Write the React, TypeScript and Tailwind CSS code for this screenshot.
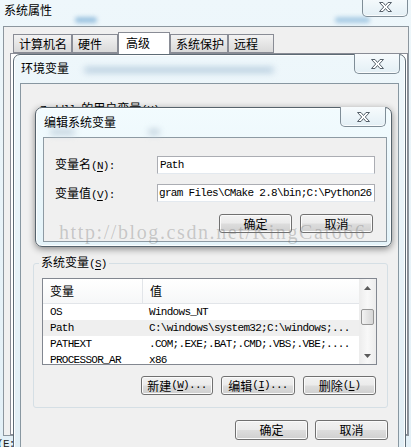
import React from "react";

const cjk = "font-['Noto_Sans_CJK_SC',sans-serif]";
const mono = "font-['Liberation_Mono','Noto_Sans_CJK_SC',monospace] text-[11px] tracking-[-0.7px]";
const btnFace =
  "h-[19px] rounded-[3px] border border-[#707070] bg-[linear-gradient(#f2f2f2_0%,#ebebeb_48%,#dddddd_52%,#cfcfcf_100%)] shadow-[inset_0_0_0_1px_#fbfbfb] flex items-center justify-center leading-none";

function CloseBtn() {
  return (
    <div className="w-[46px] h-[20px] shrink-0 rounded-b-[5px] border border-t-0 border-[#7f8d97] bg-[linear-gradient(#f7fbfd,#e3eff5)] shadow-[inset_0_-1px_0_rgba(255,255,255,0.8)] flex items-center justify-center">
      <svg width="13" height="10" viewBox="0 0 13 10">
        <path
          d="M0.5 0.5h3.5l2.5 3 2.5-3h3.5l-4.2 4.5 4.2 4.5h-3.5l-2.5-3-2.5 3h-3.5l4.2-4.5z"
          fill="#fff"
          stroke="#56606a"
          strokeWidth="1"
          strokeLinejoin="round"
        />
      </svg>
    </div>
  );
}

function Acc({ k, tail = "" }: { k: string; tail?: string }) {
  return (
    <span className={mono}>
      (<span className="underline underline-offset-2">{k}</span>){tail}
    </span>
  );
}

function Btn({ w, children }: { w: string; children: React.ReactNode }) {
  return <div className={`${btnFace} ${w}`}>{children}</div>;
}

const tabs = [
  { label: "计算机名", w: "w-[59px]" },
  { label: "硬件", w: "w-[46px]" },
  { label: "高级", w: "w-[52px]", on: true },
  { label: "系统保护", w: "w-[58px]" },
  { label: "远程", w: "w-[46px]" },
];

const rows = [
  { name: "OS", value: "Windows_NT" },
  { name: "Path", value: "C:\\windows\\system32;C:\\windows;...", sel: true },
  { name: "PATHEXT", value: ".COM;.EXE;.BAT;.CMD;.VBS;.VBE;...." },
  { name: "PROCESSOR_AR", value: "x86" },
];

function Arrow({ up }: { up?: boolean }) {
  return (
    <div className="h-[17px] flex items-center justify-center">
      <svg width="7" height="4" viewBox="0 0 7 4">
        <path d={up ? "M0 4L3.5 0L7 4z" : "M0 0L7 0L3.5 4z"} fill="#5b5b5b" />
      </svg>
    </div>
  );
}

export default function App() {
  return (
    <div className={`relative w-[411px] h-[447px] overflow-hidden bg-[linear-gradient(180deg,#eef7fb,#e3f0f7)] text-[12px] text-black ${cjk}`}>
      {/* blurred desktop behind the glass */}
      <div className="absolute left-[75px] top-[17px] w-[22px] h-[6px] rounded-full bg-[#9cc3e0] blur-[2px]" />
      <div className="absolute left-[335px] top-[17px] w-[35px] h-[6px] rounded-full bg-[#a8cbe4] blur-[2px]" />

      {/* 系统属性 */}
      <div className="absolute left-0 top-0 w-[411px] flex justify-between items-start">
        <div className="ml-[4px] mt-[2px] leading-[16px]">系统属性</div>
        <div className="mr-[3px] -mt-[3px]">
          <CloseBtn />
        </div>
      </div>
      <div className="absolute left-[3px] top-[26px] w-[406px] h-[410px] border border-[#8c969e] bg-[#f0f0f0] flex flex-col">
        <div className="h-[26px] pl-[9px] flex items-end">
          {tabs.map((t) => (
            <div
              key={t.label}
              className={
                t.on
                  ? `${t.w} h-[22px] -mb-px relative z-10 border border-b-0 border-[#898c95] bg-white pl-[7px] pt-[2px] leading-[16px]`
                  : `${t.w} h-[19px] border border-[#898c95] bg-[linear-gradient(#f3f3f3,#e6e6e6_50%,#d9d9d9)] pl-[5px] pt-[1px] leading-[16px]`
              }
            >
              {t.label}
            </div>
          ))}
        </div>
        <div className="flex-1 ml-[6px] border border-[#898c95] bg-white" />
      </div>
      <div className={`absolute left-[-3px] top-[436px] text-[#222] ${mono}`}>(E:</div>

      {/* 环境变量 */}
      <div className="absolute left-[13px] top-[54px] w-[393px] h-[420px] rounded-t-[7px] border border-[#5d6b75] bg-[linear-gradient(180deg,#eef7fb,#e1eef5)] shadow-[inset_0_0_0_1px_rgba(255,255,255,0.85)] flex flex-col">
        <div className="relative h-[28px] flex justify-between items-start">
          <div className="absolute left-[70px] top-[12px] w-[190px] h-[6px] rounded-full bg-[#b9cfe0] blur-[3px]" />
          <div className="relative ml-[7px] mt-[5px] leading-[16px]">环境变量</div>
          <div className="mr-[5px] -mt-px">
            <CloseBtn />
          </div>
        </div>
        <div className="flex-1 mx-[6px] border border-[#8897a1] bg-[#f0f0f0] flex flex-col">
          <div className="ml-[19px] mt-[16px] leading-[16px]">
            <span className={mono}>Zoddll </span>的用户变量<Acc k="U" />
          </div>
          <fieldset className="mt-[136px] ml-[12px] mr-[10px] pb-[12px] border border-[#d5dfe5] rounded-[3px]">
            <legend className="ml-[5px] px-[2px] leading-[16px]">
              系统变量<Acc k="S" />
            </legend>
            <div className="ml-[8px] mr-[10px] mt-[6px] h-[87px] border border-[#828790] bg-white flex overflow-hidden">
              <div className="flex-1 flex flex-col">
                <div className="h-[25px] shrink-0 flex border-b border-[#e2e5e9] bg-[linear-gradient(#ffffff,#f6f7f8)]">
                  <div className="w-[100px] pl-[7px] flex items-center border-r border-[#e2e5e9]">变量</div>
                  <div className="pl-[7px] flex items-center">值</div>
                </div>
                {rows.map((r) => (
                  <div key={r.name} className={`h-[16px] shrink-0 flex items-center ${r.sel ? "bg-[#efefef]" : ""}`}>
                    <div className={`w-[100px] pl-[7px] ${mono}`}>{r.name}</div>
                    <div className={`pl-[6px] whitespace-nowrap ${mono}`}>{r.value}</div>
                  </div>
                ))}
              </div>
              <div className="w-[17px] shrink-0 flex flex-col bg-[linear-gradient(90deg,#ececec,#f8f8f8_50%,#ececec)]">
                <Arrow up />
                <div className="flex-1">
                  <div className="mt-[13px] ml-[2px] w-[13px] h-[16px] rounded-[2px] border border-[#969696] bg-[linear-gradient(90deg,#f3f3f3,#e4e4e4_50%,#d6d6d6)]" />
                </div>
                <Arrow />
              </div>
            </div>
            <div className="mt-[11px] mr-[11px] flex justify-end gap-[8px]">
              <Btn w="w-[72px]">
                新建<Acc k="W" tail="..." />
              </Btn>
              <Btn w="w-[74px]">
                编辑<Acc k="I" tail="..." />
              </Btn>
              <Btn w="w-[73px]">
                删除<Acc k="L" />
              </Btn>
            </div>
          </fieldset>
          <div className="mt-[12px] mr-[10px] flex justify-end gap-[7px]">
            <Btn w="w-[73px] h-[20px]">确定</Btn>
            <Btn w="w-[73px] h-[20px]">取消</Btn>
          </div>
        </div>
      </div>

      {/* 编辑系统变量 */}
      <div className="absolute left-[35px] top-[107px] w-[357px] h-[140px] rounded-[7px] border border-[#56636c] bg-[linear-gradient(180deg,#f2fbfe,#e4f3f9)] shadow-[0_2px_7px_rgba(0,0,0,0.45),inset_0_0_0_1px_rgba(255,255,255,0.85)] flex flex-col">
        <div className="relative h-[29px] flex justify-between items-start">
          <div className="absolute left-[14px] top-[21px] w-[25px] h-[6px] rounded-full bg-[#c3d3df] blur-[3px]" />
          <div className="absolute left-[112px] top-[21px] w-[12px] h-[6px] rounded-full bg-[#c3d3df] blur-[3px]" />
          <div className="relative ml-[8px] mt-[6px] leading-[16px]">编辑系统变量</div>
          <div className="mr-[5px] -mt-px">
            <CloseBtn />
          </div>
        </div>
        <div className="flex-1 ml-[7px] mr-[4px] mb-[4px] border border-[#8d9aa3] bg-[#f0f0f0] flex flex-col">
          <div className="mt-[17px] ml-[11px] flex items-center">
            <div className="w-[102px]">
              变量名<Acc k="N" tail=":" />
            </div>
            <div className={`w-[218px] h-[18px] border border-[#abadb3] border-b-[#e3e9ef] bg-white pl-[2px] flex items-center ${mono}`}>
              Path
            </div>
          </div>
          <div className="mt-[9px] ml-[11px] flex items-center">
            <div className="w-[102px]">
              变量值<Acc k="V" tail=":" />
            </div>
            <div className={`w-[218px] h-[18px] border border-[#abadb3] border-b-[#e3e9ef] bg-white pl-[1px] flex items-center whitespace-nowrap overflow-hidden ${mono}`}>
              gram Files\CMake 2.8\bin;C:\Python26
            </div>
          </div>
          <div className="mt-[11px] mr-[13px] flex justify-end gap-[8px]">
            <Btn w="w-[73px]">确定</Btn>
            <Btn w="w-[73px]">取消</Btn>
          </div>
        </div>
      </div>

      {/* watermark */}
      <div className="absolute left-[59px] top-[220px] text-[20px] leading-[24px] tracking-[1.6px] text-[rgba(110,110,110,0.32)] font-['Liberation_Serif',serif] pointer-events-none">
        http://blog.csdn.net/KingCat666
      </div>
    </div>
  );
}
